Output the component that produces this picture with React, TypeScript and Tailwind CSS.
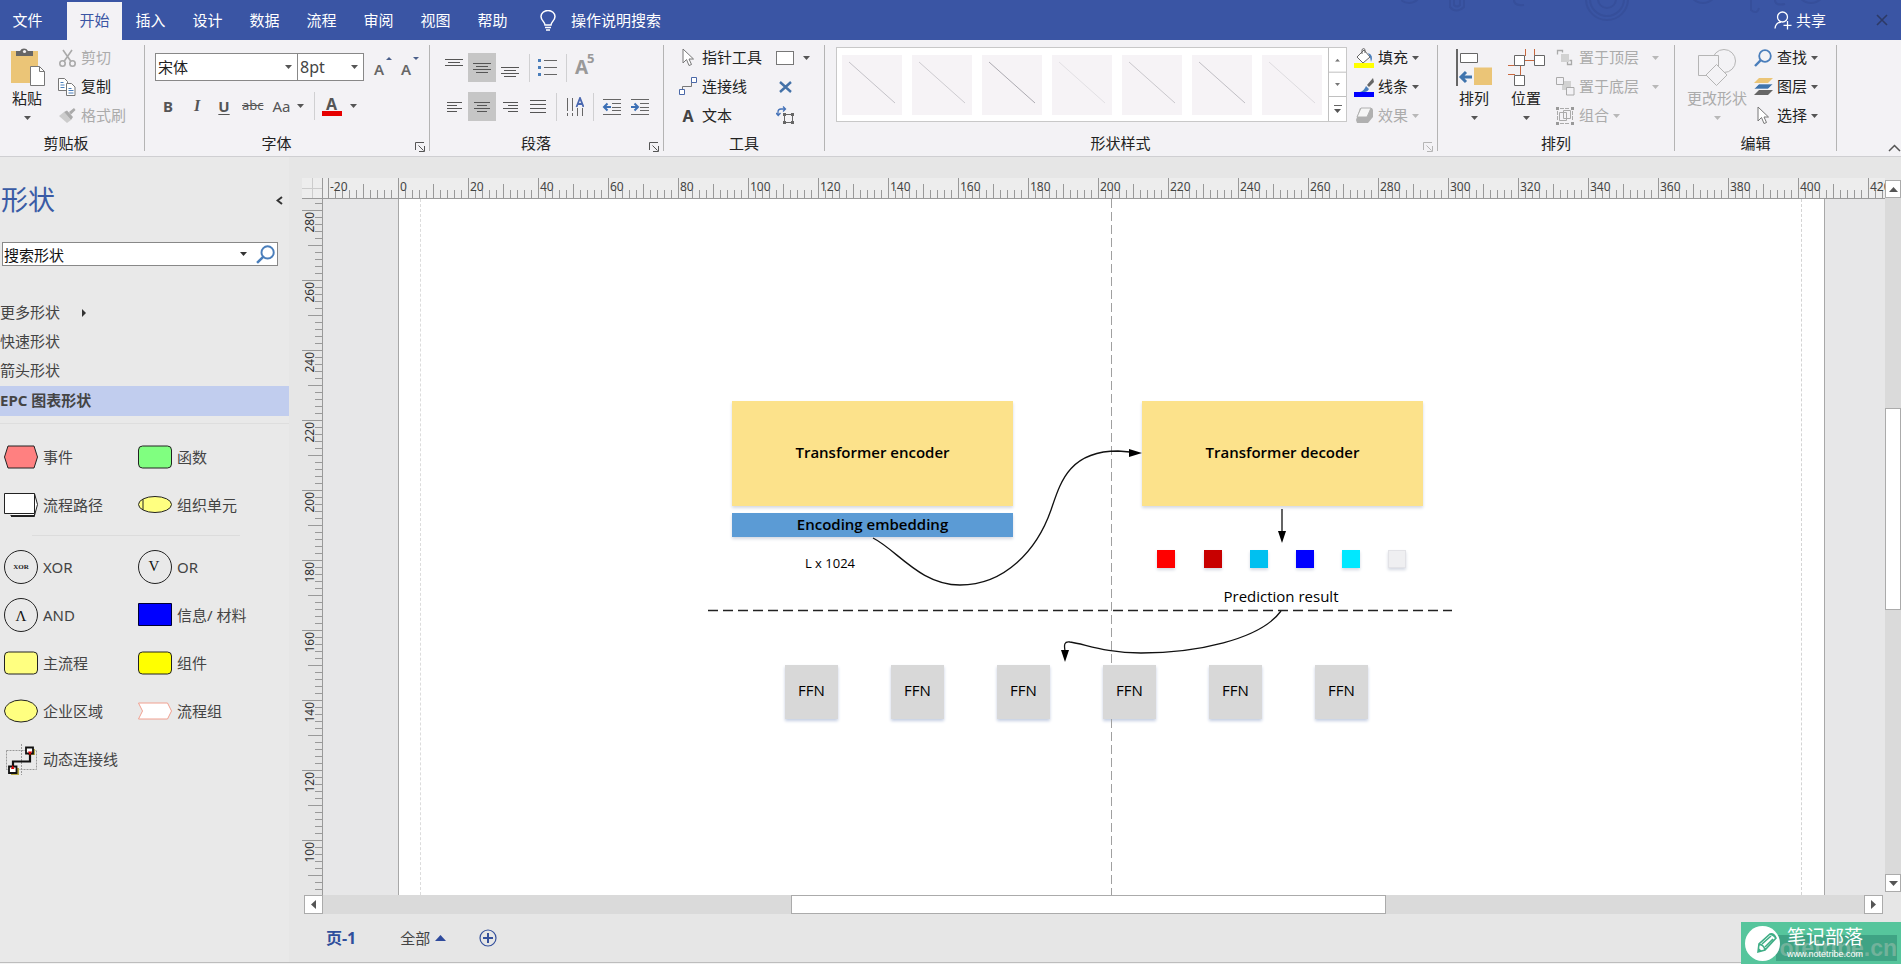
import { useState } from 'react';
import type { ReactNode } from 'react';

const TABS = ['插入', '设计', '数据', '流程', '审阅', '视图', '帮助'];

// 小三角
const Tri = ({ className = 'text-[#555]' }: { className?: string }) => (
  <svg className={`h-[4px] w-[7px] shrink-0 ${className}`} viewBox="0 0 7 4"><path d="M0 0h7L3.500 4z" fill="currentColor" /></svg>
);

const Launcher = ({ className = 'text-[#555]' }: { className?: string }) => (
  <button aria-label="更多选项" className={`absolute right-[4px] bottom-[4px] ${className}`}>
    <svg className="h-[10px] w-[10px]" viewBox="0 0 10 10" fill="none" stroke="currentColor"><path d="M.5 8V.5H9M3.500 3.500l5 5M9.500 4v5.500H4" /></svg>
  </button>
);

const Group = ({ title, className, children, launcher }: { title: string; className: string; children: ReactNode; launcher?: ReactNode }) => (
  <section aria-label={title} className={`relative flex h-full shrink-0 flex-col pt-[3px] ${className}`}>
    <div className="flex h-[88px]">{children}</div>
    <div className={`flex h-[26px] items-center justify-center text-[15px] ${launcher ? 'pr-[21px]' : ''}`}>{title}</div>
    {launcher}
  </section>
);

const Sep = () => <div className="my-[5px] w-px shrink-0 bg-[#b4b4b4]" />;
const MiniSep = () => <div className="h-[28px] w-px shrink-0 bg-[#d0d0d2]" />;

// 图标 + 文字 + 下拉
const Row = ({ icon, label, tri, disabled, triGap = 'ml-[4px]' }: { icon: ReactNode; label: string; tri?: boolean; disabled?: boolean; triGap?: string }) => (
  <button disabled={disabled} className={`flex h-[29px] items-center whitespace-nowrap text-[15px] ${disabled ? 'text-[#ababab]' : 'text-[#222]'}`}>
    <span className="mr-[4px] flex w-[20px] shrink-0 justify-center">{icon}</span>
    {label}
    {tri && <Tri className={`${triGap} ${disabled ? 'text-[#b8b8b8]' : 'text-[#555]'}`} />}
  </button>
);

const Big = ({ icon, label, disabled, className }: { icon: ReactNode; label: string; disabled?: boolean; className: string }) => (
  <button disabled={disabled} className={`flex flex-col items-center text-[15px] ${disabled ? 'text-[#ababab]' : 'text-[#222]'} ${className}`}>
    <span className="flex h-[43px] items-end">{icon}</span>
    <span className="flex h-[24px] items-center whitespace-nowrap">{label}</span>
    <Tri className={`mt-[6px] ${disabled ? 'text-[#b8b8b8]' : 'text-[#555]'}`} />
  </button>
);

const Lines = ({ rows }: { rows: number[][] }) => (
  <svg className="h-[20px] w-[20px]" viewBox="0 0 20 20" stroke="#555" fill="none">
    {rows.map(([x1, x2, y]) => <path key={y} d={`M${x1} ${y}.5H${x2}`} />)}
  </svg>
);

const Pointer = () => (
  <svg className="h-[19px] w-[14px]" viewBox="0 0 14 19" fill="#fff" stroke="#777"><path d="M2 1v14l3.500-3.500L8 17.500l2.500-1L8 11h4.500z" /></svg>
);

const Lens = ({ className }: { className: string }) => (
  <svg className={className} viewBox="0 0 18 18" fill="none" stroke="#4a7ebb"><circle cx="11" cy="7" r="5.800" strokeWidth="1.800" /><path d="M6.800 11.200L1 17" strokeWidth="2.400" /></svg>
);

const TitleBar = () => (
  <header className="relative flex h-[40px] shrink-0 items-stretch overflow-hidden bg-[#3a55a4] text-[15px] text-white">
    <svg className="absolute top-0 right-[20px] h-[24px] w-[480px]" viewBox="0 0 480 24" fill="none" stroke="#364f9b" strokeWidth="2">
      <circle cx="8" cy="-9" r="12" /><circle cx="8" cy="-9" r="8" /><path d="M49 0v7q6 7 14 0V0M53 0v5q3 3 6 0V0M113 0q0 6 10 5" />
      <circle cx="206" cy="-1" r="21" /><circle cx="206" cy="-1" r="17" /><circle cx="206" cy="-1" r="9" />
      <circle cx="302" cy="-11" r="14" /><path d="M350 0v10q6 5 8-2M374 0q0 6 10 4" /><circle cx="410" cy="-11" r="14" />
    </svg>
    <button className="mr-[12px] w-[55px]">文件</button>
    <button className="mt-[2px] w-[55px] bg-[#f3f2f5] pb-[2px] text-[#3a55a4]">开始</button>
    {TABS.map((t) => <button key={t} className="w-[57px]">{t}</button>)}
    <button className="ml-[19px] flex items-center">
      <svg className="mr-[15px] h-[21px] w-[16px]" viewBox="0 0 16 21" fill="none" stroke="#fff" strokeWidth="1.500"><path d="M5 15c0-3-4-4.500-4-8.500a7 6 0 0 1 14 0C15 10.500 11 12 11 15zM5 17.500h6M6 20h4" /></svg>
      操作说明搜索
    </button>
    <button className="relative ml-auto flex items-center">
      <svg className="mr-[4px] h-[19px] w-[18px]" viewBox="0 0 18 19" fill="none" stroke="#fff" strokeWidth="1.300"><circle cx="8.500" cy="6" r="5" /><path d="M1 17.500c.5-4 2.500-6 6-6.500M13.500 10v8.500M9.500 14.300h8" /></svg>
      共享
    </button>
    <button aria-label="关闭" className="relative mr-[13px] ml-[50px] text-[#2d3a66]">
      <svg className="h-[12px] w-[12px]" viewBox="0 0 12 12" fill="none" stroke="currentColor" strokeWidth="1.600"><path d="M1 1l10 10M11 1L1 11" /></svg>
    </button>
  </header>
);

const STYLE_LINES = ['stroke-[#c4c2c8]', 'stroke-[#cdcbd0]', 'stroke-[#aba9b0]', 'stroke-[#e2e0e4]', 'stroke-[#c9c7cc]', 'stroke-[#c0bec4]', 'stroke-[#dddbdf]'];

const Ribbon = () => (
  <div className="flex h-[117px] shrink-0 overflow-hidden border-b border-[#cfcfd2] bg-[#f3f2f5] text-[#222]">
    <Group title="剪贴板" className="w-[144px] pr-[12px]">
      <Big className="ml-[8px] w-[38px]" label="粘贴" icon={
        <svg className="h-[38px] w-[36px] translate-x-[1px]" viewBox="0 0 36 38"><path d="M1 3h27v32H1z" fill="#ebc577" /><path d="M6 3h4a4.500 4.500 0 0 1 8 0h5v5H6z" fill="#666" /><circle cx="14.500" cy="3.500" r="1.600" fill="#f3f2f5" /><path d="M20.500 18.500h9l5 5v14h-14z" fill="#fff" stroke="#777" /><path d="M29.500 18.500v5h5" fill="none" stroke="#777" /></svg>
      } />
      <div className="ml-[11px]">
        <Row disabled label="剪切" icon={<svg className="h-[18px] w-[17px]" viewBox="0 0 17 18" fill="none" stroke="#aaa" strokeWidth="1.600"><path d="M4 1l8 11.500M13 1L5 12.500" /><circle cx="3.500" cy="14.500" r="2.700" /><circle cx="13.500" cy="14.500" r="2.700" /></svg>} />
        <Row label="复制" icon={<svg className="h-[18px] w-[18px]" viewBox="0 0 18 18" fill="#fff" stroke="#777"><path d="M.5.5h6l3 3v9h-9z" /><path d="M8.500 5.500h5l3.500 3.500v8.500H8.500z" /><path d="M2.500 4.500h3M2.500 7h4M2.500 9.500h4M10.500 10.500h3M10.500 12.500h5M10.500 15h5" stroke="#4a7ebb" /></svg>} />
        <Row disabled label="格式刷" icon={<svg className="h-[16px] w-[18px]" viewBox="0 0 18 16"><path d="M1 8l5-4 7 8-4 3z" fill="#ccc" /><path d="M6 4l3-1.500 6 6.500-2 3zM11 4l5-4 1.500 2-4.500 4.500z" fill="#aaa" /></svg>} />
      </div>
    </Group>
    <Sep />
    <Group title="字体" className="w-[284px]" launcher={<Launcher />}>
      <div className="ml-[10px]">
        <div className="mt-[10px] flex h-[28px] items-center">
          <div className="relative">
            <select aria-label="字体" className="h-[28px] w-[143px] appearance-none border border-[#888] bg-white pl-[2px] text-[15px]"><option>宋体</option></select>
            <span className="pointer-events-none absolute top-[12px] right-[6px] flex"><Tri /></span>
          </div>
          <div className="relative -ml-px">
            <select aria-label="字号" className="h-[28px] w-[67px] appearance-none border border-[#888] bg-white pl-[2px] text-base text-[#444]"><option>8pt</option></select>
            <span className="pointer-events-none absolute top-[12px] right-[6px] flex"><Tri /></span>
          </div>
          <button className="relative ml-[10px] h-[20px] w-[18px] text-left text-[15px] leading-[24px] font-semibold text-[#666]">A<span className="absolute top-0 right-0 flex rotate-180"><svg className="h-[3px] w-[6px] text-[#4a5f8a]" viewBox="0 0 6 3"><path d="M0 0h6L3 3z" fill="currentColor" /></svg></span></button>
          <button className="relative ml-[9px] h-[20px] w-[18px] text-left text-[15px] leading-[24px] font-semibold text-[#666]">A<span className="absolute top-0 right-0 flex"><svg className="h-[3px] w-[6px] text-[#4a5f8a]" viewBox="0 0 6 3"><path d="M0 0h6L3 3z" fill="currentColor" /></svg></span></button>
        </div>
        <div className="mt-[11px] flex h-[28px] items-center text-[15px] text-[#555]">
          <button className="ml-[7px] w-[12px] font-bold">B</button>
          <button className="ml-[17px] w-[12px] font-['Liberation_Serif',serif] text-base font-bold italic">I</button>
          <button className="ml-[15px] w-[12px] font-bold underline underline-offset-2">U</button>
          <button className="ml-[12px] text-[13px] line-through">abc</button>
          <button className="ml-[9px] flex items-center">Aa<Tri className="ml-[6px]" /></button>
          <div className="ml-[10px]"><MiniSep /></div>
          <button className="ml-[7px] flex items-center"><span className="flex h-[20px] w-[20px] items-center justify-center border-b-[5px] border-[#e60000] text-base font-bold">A</span><Tri className="ml-[8px]" /></button>
        </div>
      </div>
    </Group>
    <Sep />
    <Group title="段落" className="w-[233px]" launcher={<Launcher />}>
      <div className="ml-[10px] pt-[10px]">
        <div className="flex h-[29px] items-center">
          <button className="flex w-[28px] justify-center"><Lines rows={[[1, 19, 1], [4, 16, 4], [1, 19, 7]]} /></button>
          <button className="flex h-[29px] w-[28px] items-center justify-center bg-[#c6c6c6]"><Lines rows={[[1, 19, 5], [4, 16, 8], [1, 19, 11], [4, 16, 14]]} /></button>
          <button className="flex w-[28px] justify-center"><Lines rows={[[1, 19, 9], [4, 16, 12], [1, 19, 15], [4, 16, 18]]} /></button>
          <div className="ml-[5px]"><MiniSep /></div>
          <button className="ml-[7px]"><svg className="h-[20px] w-[20px]" viewBox="0 0 20 20"><path d="M7 2.500h13M7 9.500h13M7 16.500h13" stroke="#666" /><path d="M1 1h3v3H1zM1 8h3v3H1zM1 15h3v3H1z" fill="#4a7ebb" /></svg></button>
          <div className="ml-[9px]"><MiniSep /></div>
          <button className="relative ml-[8px] text-[19px] font-bold text-[#999]">A<span className="absolute -top-[4px] left-[12px] text-[13px]">5</span></button>
        </div>
        <div className="mt-[10px] flex h-[29px] items-center">
          <button className="flex w-[28px] justify-center"><Lines rows={[[3, 18, 5], [3, 13, 8], [3, 18, 11], [3, 13, 14]]} /></button>
          <button className="flex h-[29px] w-[28px] items-center justify-center bg-[#c6c6c6]"><Lines rows={[[2, 18, 5], [5, 15, 8], [2, 18, 11], [5, 15, 14]]} /></button>
          <button className="flex w-[28px] justify-center"><Lines rows={[[3, 18, 5], [8, 18, 8], [3, 18, 11], [8, 18, 14]]} /></button>
          <button className="flex w-[28px] justify-center"><Lines rows={[[2, 18, 3], [2, 18, 7], [2, 18, 11], [2, 18, 15]]} /></button>
          <div className="ml-[4px]"><MiniSep /></div>
          <button className="ml-[9px]"><svg className="h-[20px] w-[18px]" viewBox="0 0 18 20" fill="none"><path d="M1.500 1v18M6.500 1v18M11.500 11v8M16.500 11v8" stroke="#666" strokeDasharray="13 2" /><path d="M10.500 10l3.500-9 3.500 9M12 7h4" stroke="#4a68b0" strokeWidth="1.800" /></svg></button>
          <div className="ml-[9px]"><MiniSep /></div>
          <button className="ml-[8px]"><svg className="h-[20px] w-[20px]" viewBox="0 0 20 20" fill="none"><path d="M1 2.500h18M10 6.500h9M10 10.500h9M10 13.500h9M1 17.500h18" stroke="#666" /><path d="M9 10H2M5.500 6.500L2 10l3.500 3.500" stroke="#3b6fb5" strokeWidth="2" /></svg></button>
          <button className="ml-[8px]"><svg className="h-[20px] w-[20px]" viewBox="0 0 20 20" fill="none"><path d="M1 2.500h18M10 6.500h9M10 10.500h9M10 13.500h9M1 17.500h18" stroke="#666" /><path d="M1 10h7M4.500 6.500L8 10l-3.500 3.500" stroke="#3b6fb5" strokeWidth="2" /></svg></button>
        </div>
      </div>
    </Group>
    <Sep />
    <Group title="工具" className="w-[160px]">
      <div className="ml-[14px] w-[98px]">
        <Row label="指针工具" icon={<Pointer />} />
        <Row label="连接线" icon={<svg className="h-[19px] w-[19px]" viewBox="0 0 19 19" fill="#fff" stroke="#4a68a8"><path d="M3.500 13V9.500h9V4" fill="none" stroke="#777" /><path d="M12.500.5h5v5h-5zM.5 12.500h5v5h-5z" /></svg>} />
        <Row label="文本" icon={<span className="text-base font-bold text-[#444]">A</span>} />
      </div>
      <div className="flex flex-col">
        <button aria-label="矩形" className="flex h-[29px] items-center"><span className="mr-[9px] h-[14px] w-[18px] border border-[#777] bg-white" /><Tri /></button>
        <button aria-label="连接点" className="flex h-[29px] items-center pl-[3px]"><svg className="h-[12px] w-[13px]" viewBox="0 0 13 12" stroke="#4472a8" strokeWidth="2.400"><path d="M1 1l11 10M12 1L1 11" /></svg></button>
        <button aria-label="文本块" className="flex h-[29px] items-center"><svg className="h-[19px] w-[19px]" viewBox="0 0 19 19" fill="none"><path d="M2 9V6a3 3 0 0 1 3-3h4M7 .5L9.500 3 7 5.500M0 7l2.200 2.500L4.500 7" stroke="#4472b8" strokeWidth="1.300" /><path d="M8.500 8.500h8v8h-8z" stroke="#666" /><path d="M7 7h3v3H7zM15 7h3v3h-3zM7 15h3v3H7zM15 15h3v3h-3z" fill="#666" /></svg></button>
      </div>
    </Group>
    <Sep />
    <Group title="形状样式" className="w-[612px]" launcher={<Launcher className="text-[#b5b5b5]" />}>
      <div className="mt-[4px] ml-[11px] flex h-[75px] border border-[#c8c8c8] bg-white">
        <div className="flex items-center gap-[10px] pr-[6px] pl-[5px]">
          {STYLE_LINES.map((c) => (
            <button key={c} aria-label="样式" className="h-[60px] w-[60px] bg-[#f6f3f6]"><svg className={`h-[60px] w-[60px] ${c}`} viewBox="0 0 60 60"><path d="M7 7l46 41" /></svg></button>
          ))}
        </div>
        <div className="flex w-[18px] flex-col border-l border-[#c0c0c0] text-[#777]">
          <button aria-label="上一行" className="flex flex-1 rotate-180 items-center justify-center border-t border-[#c0c0c0]"><svg className="h-[3px] w-[5px]" viewBox="0 0 5 3"><path d="M0 0h5L2.500 3z" fill="currentColor" /></svg></button>
          <button aria-label="下一行" className="flex flex-1 items-center justify-center border-b border-[#c0c0c0]"><svg className="h-[3px] w-[5px]" viewBox="0 0 5 3"><path d="M0 0h5L2.500 3z" fill="currentColor" /></svg></button>
          <button aria-label="其他" className="flex flex-1 flex-col items-center justify-center gap-[3px]"><span className="h-px w-[8px] bg-[#666]" /><Tri /></button>
        </div>
      </div>
      <div className="ml-[7px]">
        <Row tri label="填充" icon={<svg className="h-[20px] w-[20px]" viewBox="0 0 20 20"><path d="M10 2l6 7-7 6-6-6z" fill="#fff" stroke="#666" /><path d="M8 6V1.500q2-2 3 0V5" fill="none" stroke="#666" /><path d="M14 5q6 2 3 9l-1-5z" fill="#4a7ebb" /><path d="M0 15h20v5H0z" fill="#ff0" /></svg>} />
        <Row tri label="线条" icon={<svg className="h-[20px] w-[20px]" viewBox="0 0 20 20"><path d="M19 1l1 4-5 5-2-2z" fill="#666" /><path d="M12 9l3 3q-2 4-9 3 4-1 6-6z" fill="#4a7ebb" /><path d="M0 15h20v5H0z" fill="#00f" /></svg>} />
        <Row tri disabled label="效果" icon={<svg className="h-[17px] w-[19px]" viewBox="0 0 19 17"><path d="M5 1h12l1 2v7l-5 6H2l-1-3z" fill="#b0b0b0" /><path d="M6 1h10l-4 9H2z" fill="#f5f5f5" stroke="#b0b0b0" /></svg>} />
      </div>
    </Group>
    <Sep />
    <Group title="排列" className="w-[236px]">
      <Big className="ml-[16px] w-[40px]" label="排列" icon={
        <svg className="h-[37px] w-[37px]" viewBox="0 0 37 37"><path d="M1 0v37" stroke="#666" strokeWidth="2" /><path d="M4.500 4.500h17v9h-17z" fill="#fff" stroke="#666" /><path d="M18 18.500h18V36H18z" fill="#ebc577" /><path d="M16 28H5M10 23l-5 5 5 5" fill="none" stroke="#3f74ad" strokeWidth="3" /></svg>
      } />
      <Big className="ml-[12px] w-[40px]" label="位置" icon={
        <svg className="h-[37px] w-[37px]" viewBox="0 0 37 37"><path d="M17.500 0v7M26.500 0v7M17 11.500h9M0 16.500h12.500V26M0 25.500h7" stroke="#c9683e" fill="none" /><path d="M6.500 6.500h10v10h-10zM26.500 6.500h10v10h-10zM6.500 26.500h10v10h-10z" fill="#fff" stroke="#666" /></svg>
      } />
      <div className="ml-[9px]">
        <Row disabled tri triGap="ml-[13px]" label="置于顶层" icon={<svg className="h-[17px] w-[18px]" viewBox="0 0 18 17" fill="none" stroke="#aaa"><path d="M5 5h8v8H5z" fill="#d2d2d2" stroke="none" /><path d="M1.500 5.500v-4h5v2M11.500 13v2.500h4v-4h-2" strokeWidth="1.300" /></svg>} />
        <Row disabled tri triGap="ml-[13px]" label="置于底层" icon={<svg className="h-[19px] w-[19px]" viewBox="0 0 19 19" fill="#f3f2f5" stroke="#aaa"><path d="M6 4h9v9H6z" fill="#d2d2d2" stroke="none" /><path d="M.5.5h7v7h-7zM10.500 10.500h7.500v7.500h-7.500z" /></svg>} />
        <Row disabled tri label="组合" icon={<svg className="h-[18px] w-[18px]" viewBox="0 0 18 18" fill="none" stroke="#aaa"><path d="M3.500 5.500h7v8h-7zM7.500 3.500h7v8h-7z" /><path d="M4 1.500h10M4 16.500h10M1.500 4v10M16.500 4v10" strokeDasharray="4 1" /><path d="M0 0h3v3H0zM15 0h3v3h-3zM0 15h3v3H0zM15 15h3v3h-3z" fill="#999" stroke="none" /></svg>} />
      </div>
    </Group>
    <Sep />
    <Group title="编辑" className="w-[161px]">
      <Big disabled className="ml-[11px] w-[62px]" label="更改形状" icon={
        <svg className="h-[37px] w-[38px]" viewBox="0 0 38 37" fill="#f3f2f5" stroke="#b5b5b5"><circle cx="26" cy="12" r="11.500" /><path d="M.5 6.500h20v20H.5z" /><path d="M18.500 15.500l10.500 10.500-10.500 10.500L8 26z" /></svg>
      } />
      <div className="ml-[5px]">
        <Row tri label="查找" icon={<Lens className="h-[18px] w-[18px]" />} />
        <Row tri label="图层" icon={<svg className="h-[19px] w-[19px]" viewBox="0 0 19 19"><path d="M5 13h14l-5 5H0z" fill="#666" /><path d="M5 7h14l-5 5H0z" fill="#3f74ad" stroke="#f3f2f5" strokeWidth=".6" /><path d="M5 1h14l-5 5H0z" fill="#ebc577" /></svg>} />
        <Row tri label="选择" icon={<Pointer />} />
      </div>
    </Group>
    <Sep />
    <button aria-label="折叠功能区" className="mt-auto ml-auto pb-[4px]"><svg className="h-[8px] w-[13px]" viewBox="0 0 13 8" fill="none" stroke="#555" strokeWidth="1.500"><path d="M1 7l5.500-5.500L12 7" /></svg></button>
  </div>
);

const Stencil = ({ label, children }: { label: string; children: ReactNode }) => (
  <button className="flex h-[48px] items-center gap-[5px] text-left text-[15px] whitespace-nowrap text-[#444]">
    <svg className="h-[34px] w-[34px] shrink-0" viewBox="0 0 34 34" stroke="#222" fill="none">{children}</svg>
    {label}
  </button>
);

const Sidebar = () => {
  const [keyword, setKeyword] = useState('搜索形状');

  return (
    <aside className="w-[289px] shrink-0 overflow-hidden bg-[#e9e9e9] text-[15px] text-[#444]">
      <div className="mt-[20px] flex h-[46px] items-center justify-between pl-px">
        <h1 className="text-[27px] text-[#3a5ba5]">形状</h1>
        <button aria-label="收起" className="mr-[6px]"><svg className="h-[9px] w-[7px]" viewBox="0 0 7 9" fill="none" stroke="#333" strokeWidth="2"><path d="M6 1L1.500 4.500 6 8" /></svg></button>
      </div>
      <div className="mt-[19px] mr-[11px] ml-[2px] flex h-[24px] items-center border border-[#888] bg-white">
        <input aria-label="搜索形状" value={keyword} onChange={(e) => setKeyword(e.target.value)} className="h-full min-w-0 flex-1 pl-px text-[15px] text-[#111] outline-none" />
        <Tri className="mr-[9px] text-[#333]" />
        <button aria-label="搜索" className="mr-[2px]"><Lens className="h-[19px] w-[19px]" /></button>
      </div>
      <nav className="mt-[32px] flex flex-col">
        <button className="flex h-[29px] items-center">更多形状<svg className="ml-[22px] h-[8px] w-[4px]" viewBox="0 0 4 8"><path d="M0 0v8l4-4z" fill="#333" /></svg></button>
        <button className="h-[29px] text-left">快速形状</button>
        <button className="h-[29px] text-left">箭头形状</button>
        <button className="mt-px h-[30px] bg-[#c1cdee] pb-px text-left font-bold">EPC 图表形状</button>
      </nav>
      <div className="mt-[7px] border-t border-[#dedede] pt-[9px] pl-[4px]">
        <div className="grid grid-cols-[134px_1fr]">
          <Stencil label="事件"><path d="M4 6h26l3.500 11L30 28H4L.5 17z" fill="#ff8080" /></Stencil>
          <Stencil label="函数"><rect x=".5" y="6" width="33" height="22" rx="4" fill="#80ff80" /></Stencil>
          <Stencil label="流程路径"><path d="M6.500 27.500h24l3-11-3-11" fill="#fff" /><path d="M.5 5.500h30v20H.5z" fill="#fff" /><path d="M30.500 25.500v3H7" /></Stencil>
          <Stencil label="组织单元"><ellipse cx="17" cy="16.500" rx="16.500" ry="8" fill="#ffff80" /><path d="M5 11v11" /></Stencil>
        </div>
        <div className="mt-[6px] mb-[7px] ml-[28px] h-px w-[208px] bg-[#dcdcdc]" />
        <div className="grid grid-cols-[134px_1fr]">
          <Stencil label="XOR"><circle cx="17" cy="17" r="16.500" /><text x="17" y="19" textAnchor="middle" className="fill-[#222] stroke-none font-['Liberation_Serif',serif] text-[7px] font-bold">XOR</text></Stencil>
          <Stencil label="OR"><circle cx="17" cy="17" r="16.500" /><text x="16" y="21" textAnchor="middle" className="fill-[#111] stroke-none font-['Liberation_Serif',serif] text-[15px]">V</text></Stencil>
          <Stencil label="AND"><circle cx="17" cy="17" r="16.500" /><text x="17" y="23" textAnchor="middle" className="fill-[#111] stroke-none font-['Liberation_Serif',serif] text-[15px]">Λ</text></Stencil>
          <Stencil label="信息/ 材料"><path d="M.5 5.500h33v22H.5z" fill="#00f" stroke="#003" /></Stencil>
          <Stencil label="主流程"><rect x=".5" y="6" width="33" height="22" rx="4" fill="#ffff80" /></Stencil>
          <Stencil label="组件"><rect x=".5" y="6" width="33" height="22" rx="4" fill="#ff0" /></Stencil>
          <Stencil label="企业区域"><ellipse cx="17" cy="17" rx="16.500" ry="11" fill="#ffff80" /></Stencil>
          <Stencil label="流程组"><path d="M.5 9h29l4 8-4 8H.5l4-8z" fill="#fff" stroke="#f0a090" /></Stencil>
          <Stencil label="动态连接线"><path d="M2.500 8.500h30v19h-30zM17.500 2v31" stroke="#999" strokeDasharray="2 1" /><path d="M24 7h7v6h-7zM7 26h8v7H7z" fill="#b5a642" stroke="none" /><path d="M9 25V19.500h17V11" stroke="#111" strokeWidth="2.200" /><path d="M22 5.500h7v6h-7zM5 24.500h7.500v6.500H5z" fill="#fff" stroke="#111" strokeWidth="1.800" /><path d="M24 9.500l2 4 2-4zM7 27l1.700-4 1.700 4z" fill="#d00" stroke="none" /></Stencil>
        </div>
      </div>
    </aside>
  );
};

// 标尺: 70px = 20 个单位, 每 7px 一格
const RulerX = () => (
  <svg className="h-[21px] min-w-0 flex-1 border-b border-[#9a9a9a]" stroke="#999" shapeRendering="crispEdges">
    {Array.from({ length: 300 }, (_, i) => {
      const x = 5.5 + i * 7;
      return <path key={i} d={`M${x} ${i % 10 === 0 ? 0 : i % 5 === 0 ? 6 : 12}V21`} />;
    })}
    {Array.from({ length: 23 }, (_, i) => (
      <text key={i} x={7 + i * 70} y="13" className="fill-[#444] stroke-none text-[12px]">{(i - 1) * 20}</text>
    ))}
  </svg>
);

const RulerY = () => (
  <svg className="h-full w-[21px] shrink-0 border-r border-[#9a9a9a]" stroke="#999" shapeRendering="crispEdges">
    {Array.from({ length: 200 }, (_, i) => {
      const n = i - 1;
      return <path key={i} d={`M${n % 10 === 0 ? 0 : n % 5 === 0 ? 6 : 13} ${11.5 + n * 7}H21`} />;
    })}
    {Array.from({ length: 10 }, (_, i) => (
      <text key={i} transform={`translate(12 ${13 + i * 70}) rotate(-90)`} textAnchor="end" className="fill-[#333] stroke-none text-[12px]">{280 - i * 20}</text>
    ))}
  </svg>
);

const SQUARES = [
  'left-[758px] bg-[#ff0000]',
  'left-[805px] bg-[#c80000]',
  'left-[851px] bg-[#00c0f0]',
  'left-[897px] bg-[#0000ff]',
  'left-[943px] bg-[#00e8ff]',
  'left-[989px] bg-[#efeff1] border border-[#e2e2e6]',
];
const FFN = ['left-[386px]', 'left-[492px]', 'left-[598px]', 'left-[704px]', 'left-[810px]', 'left-[916px]'];

const Page = () => (
  <div className="relative ml-[75px] h-full w-[1427px] border-x border-[#a8a8a8] bg-white font-['Open_Sans','Noto_Sans_CJK_SC',sans-serif] text-[15px] text-black">
    <div className="absolute inset-y-0 left-[21px] border-l border-dashed border-[#dcdcdc]" />
    <div className="absolute inset-y-0 left-[1402px] border-l border-dashed border-[#d4d4d4]" />
    <div className="absolute top-[202px] left-[333px] flex h-[105px] w-[281px] items-center justify-center bg-[#fce28b] pb-[3px] font-semibold shadow-[0_2px_3px_#d4d8e2]">Transformer encoder</div>
    <div className="absolute top-[314px] left-[333px] flex h-[24px] w-[281px] items-center justify-center bg-[#5b9bd5] pb-px font-semibold shadow-[0_2px_3px_#d4d8e2]">Encoding embedding</div>
    <div className="absolute top-[202px] left-[743px] flex h-[105px] w-[281px] items-center justify-center bg-[#fce28b] pb-[3px] font-semibold shadow-[0_2px_3px_#d4d8e2]">Transformer decoder</div>
    <div className="absolute top-[354px] left-[371px] w-[120px] text-center text-[13px] leading-[20px]">L x 1024</div>
    {SQUARES.map((c) => <div key={c} className={`absolute top-[351px] h-[18px] w-[18px] shadow-[0_2px_3px_#d4d8e2] ${c}`} />)}
    <div className="absolute top-[387px] left-[802px] w-[160px] text-center leading-[20px]">Prediction result</div>
    {FFN.map((c) => <div key={c} className={`absolute top-[466px] flex h-[54px] w-[53px] items-center justify-center bg-[#d8d8d8] pb-[4px] shadow-[0_2px_3px_#c4cee2] ${c}`}>FFN</div>)}
    {/* 连接线 */}
    <svg className="absolute inset-0 h-full w-full" fill="none" stroke="#111" strokeWidth="1.300">
      <path d="M712.500 0V466M712.500 520V2000" stroke="#a0a0a0" strokeWidth="1" strokeDasharray="9 4" />
      <path d="M309 411.500H1053" stroke="#222" strokeDasharray="10 5" />
      <path d="M474 339C498 351 521 386 561 386C606 386 638 351 652 311C661 285 669 252 719 252L731 253" />
      <path d="M743 254l-13-4v8z" fill="#000" stroke="none" />
      <path d="M883 310V333" />
      <path d="M883 344l-4-12h8z" fill="#000" stroke="none" />
      <path d="M882 412C861 441 796 454 742 454C706 454 686 445 671 443C665 442 665 446 666 452" />
      <path d="M666 463l-4-12h8z" fill="#000" stroke="none" />
    </svg>
  </div>
);

const ScrollBtn = ({ label, d, className }: { label: string; d: string; className: string }) => (
  <button aria-label={label} className={`flex shrink-0 items-center justify-center border border-[#ababab] bg-white ${className}`}>
    <svg className="h-[9px] w-[9px]" viewBox="0 0 9 9"><path d={d} fill="#555" /></svg>
  </button>
);

const Workspace = () => (
  <main className="ml-[13px] flex min-w-0 flex-1 flex-col pt-[21px]">
    <div className="flex min-h-0 flex-1">
      <div className="flex min-w-0 flex-1 flex-col overflow-hidden">
        <div className="flex h-[21px] shrink-0 bg-[#ededed]">
          <div className="relative w-[21px] shrink-0 border-r border-b border-[#9a9a9a]">
            <div className="absolute inset-y-0 left-[10px] border-l border-[#ccc]" />
            <div className="absolute inset-x-0 top-[10px] border-t border-[#ccc]" />
          </div>
          <RulerX />
        </div>
        <div className="flex min-h-0 flex-1">
          <RulerY />
          <div className="min-w-0 flex-1 overflow-hidden bg-[#e7e7e8]"><Page /></div>
        </div>
      </div>
      <div className="mt-[2px] mb-[3px] flex w-[16px] shrink-0 flex-col bg-[#dadada]">
        <ScrollBtn label="向上" className="h-[18px]" d="M0 7h9L4.500 2z" />
        <div className="grow-[211]" />
        <div className="grow-[200] border border-[#ababab] bg-white" />
        <div className="grow-[265]" />
        <ScrollBtn label="向下" className="h-[18px]" d="M0 2h9L4.500 7z" />
      </div>
    </div>
    <div className="mr-[18px] ml-[2px] flex h-[19px] shrink-0 bg-[#dadada]">
      <ScrollBtn label="向左" className="w-[19px]" d="M7 0v9L2 4.500z" />
      <div className="grow-[468]" />
      <div className="grow-[594] border border-[#ababab] bg-white" />
      <div className="grow-[478]" />
      <ScrollBtn label="向右" className="w-[19px]" d="M2 0v9l5-4.500z" />
    </div>
    <div className="flex h-[48px] shrink-0 items-center pl-[24px] text-[15px] text-[#444]">
      <button className="text-base font-bold text-[#2f4f9c]">页-1</button>
      <button className="ml-[44px] flex items-center">全部<svg className="ml-[5px] h-[6px] w-[11px]" viewBox="0 0 11 6"><path d="M0 6h11L5.500 0z" fill="#2f4a9c" /></svg></button>
      <button aria-label="新建页" className="ml-[33px]"><svg className="h-[18px] w-[18px]" viewBox="0 0 18 18" fill="none" stroke="#34509c"><circle cx="9" cy="9" r="8" strokeWidth="1.200" /><path d="M9 4v10M4 9h10" strokeWidth="2" /></svg></button>
    </div>
  </main>
);

const Watermark = () => (
  <div className="absolute right-0 bottom-0 flex h-[42px] w-[160px] items-center overflow-hidden bg-[#56c59c] font-['Liberation_Sans','Noto_Sans_CJK_SC',sans-serif]">
    <div className="absolute right-[4px] bottom-[3px] flex h-[26px] w-[121px] items-center justify-end bg-[#3fa384] text-[23px] leading-none font-bold text-[#72b29b]">otetribe.cn</div>
    <svg className="relative ml-[4px] h-[35px] w-[35px]" viewBox="0 0 35 35"><circle cx="17.500" cy="17.500" r="17.500" fill="#fff" /><path d="M13 26l1-8L25 8q4-1 6 4L20 24zM14 18q5 1 6 6M25 8q4 1 6 4M17 18L26 10M20 21l8-8" fill="none" stroke="#3fae86" strokeWidth="1.600" /><path d="M13 26l.5-4 3.500 3z" fill="#3fae86" /></svg>
    <div className="relative ml-[7px] text-white">
      <div className="text-[19px] leading-[22px]">笔记部落</div>
      <div className="text-[9px] leading-[10px]">www.notetribe.com</div>
    </div>
  </div>
);

export default () => (
  <div className="relative flex h-screen flex-col overflow-hidden bg-[#e6e6e6] font-['Noto_Sans','Noto_Sans_CJK_SC',sans-serif]">
    <TitleBar />
    <Ribbon />
    <div className="flex min-h-0 flex-1">
      <Sidebar />
      <Workspace />
    </div>
    <div className="h-[2px] shrink-0 border-t border-[#bdbdbd] bg-[#f3f3f3]" />
    <Watermark />
  </div>
);
